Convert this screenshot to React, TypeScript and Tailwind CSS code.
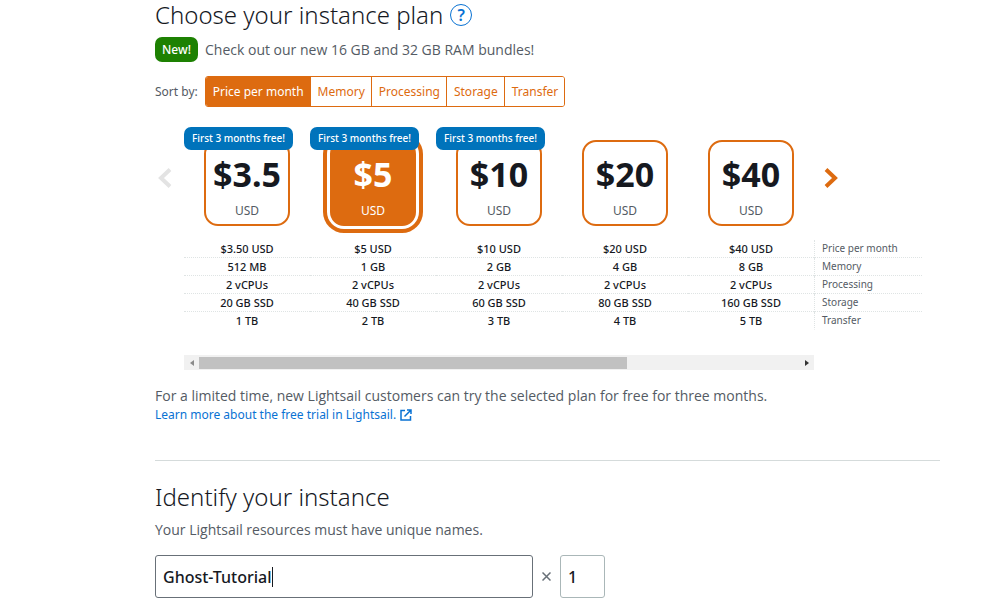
import { useState } from 'react';
import clsx from 'clsx';

const plans = [
  { price: '$3.5', values: ['$3.50 USD', '512 MB', '2 vCPUs', '20 GB SSD', '1 TB'], trial: true },
  { price: '$5', values: ['$5 USD', '1 GB', '2 vCPUs', '40 GB SSD', '2 TB'], trial: true },
  { price: '$10', values: ['$10 USD', '2 GB', '2 vCPUs', '60 GB SSD', '3 TB'], trial: true },
  { price: '$20', values: ['$20 USD', '4 GB', '2 vCPUs', '80 GB SSD', '4 TB'], trial: false },
  { price: '$40', values: ['$40 USD', '8 GB', '2 vCPUs', '160 GB SSD', '5 TB'], trial: false },
];

const specs = ['Price per month', 'Memory', 'Processing', 'Storage', 'Transfer'];

const SortBar = () => {
  const [sort, setSort] = useState('Price per month');

  return (
    <div className="mt-[14px] flex items-center gap-[7px] text-xs">
      <span className="text-[#545b64]">Sort by:</span>
      <div className="flex h-[31px] divide-x divide-[#dd6b10] overflow-hidden rounded-[3px] border border-[#dd6b10]">
        {specs.map((spec) => (
          <button
            key={spec}
            type="button"
            aria-pressed={sort === spec}
            onClick={() => setSort(spec)}
            className={clsx(
              'pr-[6px] pl-[7px] whitespace-nowrap',
              sort === spec ? 'bg-[#dd6b10] text-white' : 'bg-white text-[#dd6b10]',
            )}
          >
            {spec}
          </button>
        ))}
      </div>
    </div>
  );
};

const PlanCards = () => {
  const [selected, setSelected] = useState('$5');

  return (
    <div className="grid grid-cols-5">
      {plans.map(({ price, trial }) => {
        const active = price === selected;
        return (
          <label key={price} className="relative flex cursor-pointer justify-center pt-[13px]">
            <input
              type="radio"
              name="plan"
              className="sr-only"
              checked={active}
              onChange={() => setSelected(price)}
            />
            <span
              className={clsx(
                'flex h-[86px] w-[86px] flex-col items-center rounded-[14px] border-2 border-[#dd6b10]',
                active
                  ? 'bg-[#dd6b10] text-white shadow-[0_0_0_3px_#fff,0_0_0_7px_#dd6b10]'
                  : 'bg-white text-[#16191f]',
              )}
            >
              <span className="mt-3 text-[34px] leading-[40px] font-bold">{price}</span>
              <span className={clsx('mt-2 text-xs leading-[18px]', !active && 'text-[#545b64]')}>
                USD
              </span>
            </span>
            {trial && (
              <span className="absolute top-0 left-0 flex h-[23px] w-[109px] items-center justify-center rounded-[7px] bg-[#0073bb] text-[10px] font-medium whitespace-nowrap text-white">
                First 3 months free!
              </span>
            )}
          </label>
        );
      })}
    </div>
  );
};

const SpecTable = () => (
  <table className="mt-[14px] w-[738px] table-fixed border-separate border-spacing-0 text-[11px] leading-[17px]">
    <tbody>
      {specs.map((spec, row) => (
        <tr key={spec} className="group">
          {plans.map((plan) => (
            <td
              key={plan.price}
              className="w-[126px] border-b border-dotted border-[#dfe4e4] p-0 text-center font-medium text-[#16191f] group-last:border-transparent"
            >
              {plan.values[row]}
            </td>
          ))}
          <th
            scope="row"
            className="border-b border-l border-dotted border-[#dfe4e4] py-0 pl-[7px] text-left text-[10px] font-normal text-[#545b64] group-last:border-b-transparent"
          >
            {spec}
          </th>
        </tr>
      ))}
    </tbody>
  </table>
);

const ScrollBar = () => (
  <div className="mt-[25px] flex h-[15px] w-[630px] items-center bg-[#f1f1f1]">
    <button type="button" aria-label="Scroll left" className="flex w-[15px] justify-center">
      <svg width="4" height="6" viewBox="0 0 4 6" fill="#8b8b8b">
        <path d="M4 0v6L0 3z" />
      </svg>
    </button>
    <div className="flex-1">
      <div className="h-3 w-[428px] bg-[#c1c1c1]" />
    </div>
    <button type="button" aria-label="Scroll right" className="flex w-[15px] justify-center">
      <svg width="4" height="6" viewBox="0 0 4 6" fill="#333">
        <path d="M0 0v6l4-3z" />
      </svg>
    </button>
  </div>
);

const PlanPicker = () => (
  <div className="mt-5 flex items-start">
    <button type="button" aria-label="Previous plans" className="mt-[41px] w-[29px] pl-[3px]">
      <svg width="14" height="20" viewBox="0 0 14 20" fill="none" stroke="#e3e3e3" strokeWidth="4">
        <path d="M12 1.5L3 10l9 8.5" />
      </svg>
    </button>
    <div className="w-[630px]">
      <PlanCards />
      <SpecTable />
      <ScrollBar />
    </div>
    <button type="button" aria-label="Next plans" className="mt-[41px] pl-[10px]">
      <svg width="14" height="20" viewBox="0 0 14 20" fill="none" stroke="#dd6b10" strokeWidth="4">
        <path d="M2 1.5L11 10l-9 8.5" />
      </svg>
    </button>
  </div>
);

const InstanceName = () => {
  const [name, setName] = useState('Ghost-Tutorial');
  const [count, setCount] = useState('1');

  return (
    <div className="mt-[15px] flex items-center text-base font-medium text-[#16191f]">
      <label className="flex h-[43px] w-[378px] items-center rounded-[3px] border border-[#687078] px-[7px]">
        <input
          aria-label="Instance name"
          className="field-sizing-content caret-transparent outline-none"
          value={name}
          onChange={(e) => setName(e.target.value)}
        />
        <span className="h-5 w-px bg-[#16191f]" />
      </label>
      <svg className="mx-[9px]" width="9" height="9" viewBox="0 0 9 9" stroke="#687078" strokeWidth="1.5">
        <path d="M.5.5l8 8M8.5.5l-8 8" />
      </svg>
      <input
        aria-label="Number of instances"
        className="h-[43px] w-[45px] rounded-[3px] border border-[#aab7b8] px-[7px] outline-none"
        value={count}
        onChange={(e) => setCount(e.target.value)}
      />
    </div>
  );
};

export default function App() {
  return (
    <main className="bg-white pr-[60px] pl-[155px] font-['Noto_Sans','Open_Sans',sans-serif]">
      <section>
        <div className="flex h-[30px] items-center gap-[7px]">
          <h2 className="text-2xl leading-[30px] font-light text-[#16191f]">
            Choose your instance plan
          </h2>
          <button
            type="button"
            aria-label="Help"
            className="flex h-[22px] w-[22px] items-center justify-center rounded-full border border-[#0972d3] text-base font-semibold text-[#0972d3]"
          >
            ?
          </button>
        </div>
        <div className="mt-[7px] flex items-center gap-[7px]">
          <span className="flex h-[25px] w-[43px] items-center justify-center rounded-[7px] bg-[#1d8102] text-xs font-medium text-white">
            New!
          </span>
          <p className="font-['Open_Sans',sans-serif] text-sm text-[#545b64]">
            Check out our new 16 GB and 32 GB RAM bundles!
          </p>
        </div>
        <SortBar />
        <PlanPicker />
        <p className="mt-4 font-['Open_Sans',sans-serif] text-sm leading-5 text-[#545b64]">
          For a limited time, new Lightsail customers can try the selected plan for free for three
          months.
        </p>
        <a href="#trial" className="flex items-center gap-1 text-xs leading-[18px] text-[#0972d3]">
          Learn more about the free trial in Lightsail.
          <svg width="12" height="12" viewBox="0 0 12 12" fill="none" stroke="currentColor" strokeWidth="1.5">
            <path d="M5 1.5H1v9.5h9.5V7M7 1h4v4M11 1L4.5 7.5" />
          </svg>
        </a>
      </section>
      <hr className="mt-9 border-[#d5dbdb]" />
      <section className="pt-[21px]">
        <h2 className="text-2xl leading-[30px] font-light text-[#16191f]">
          Identify your instance
        </h2>
        <p className="mt-2 font-['Open_Sans',sans-serif] text-sm leading-5 text-[#545b64]">
          Your Lightsail resources must have unique names.
        </p>
        <InstanceName />
      </section>
    </main>
  );
}
